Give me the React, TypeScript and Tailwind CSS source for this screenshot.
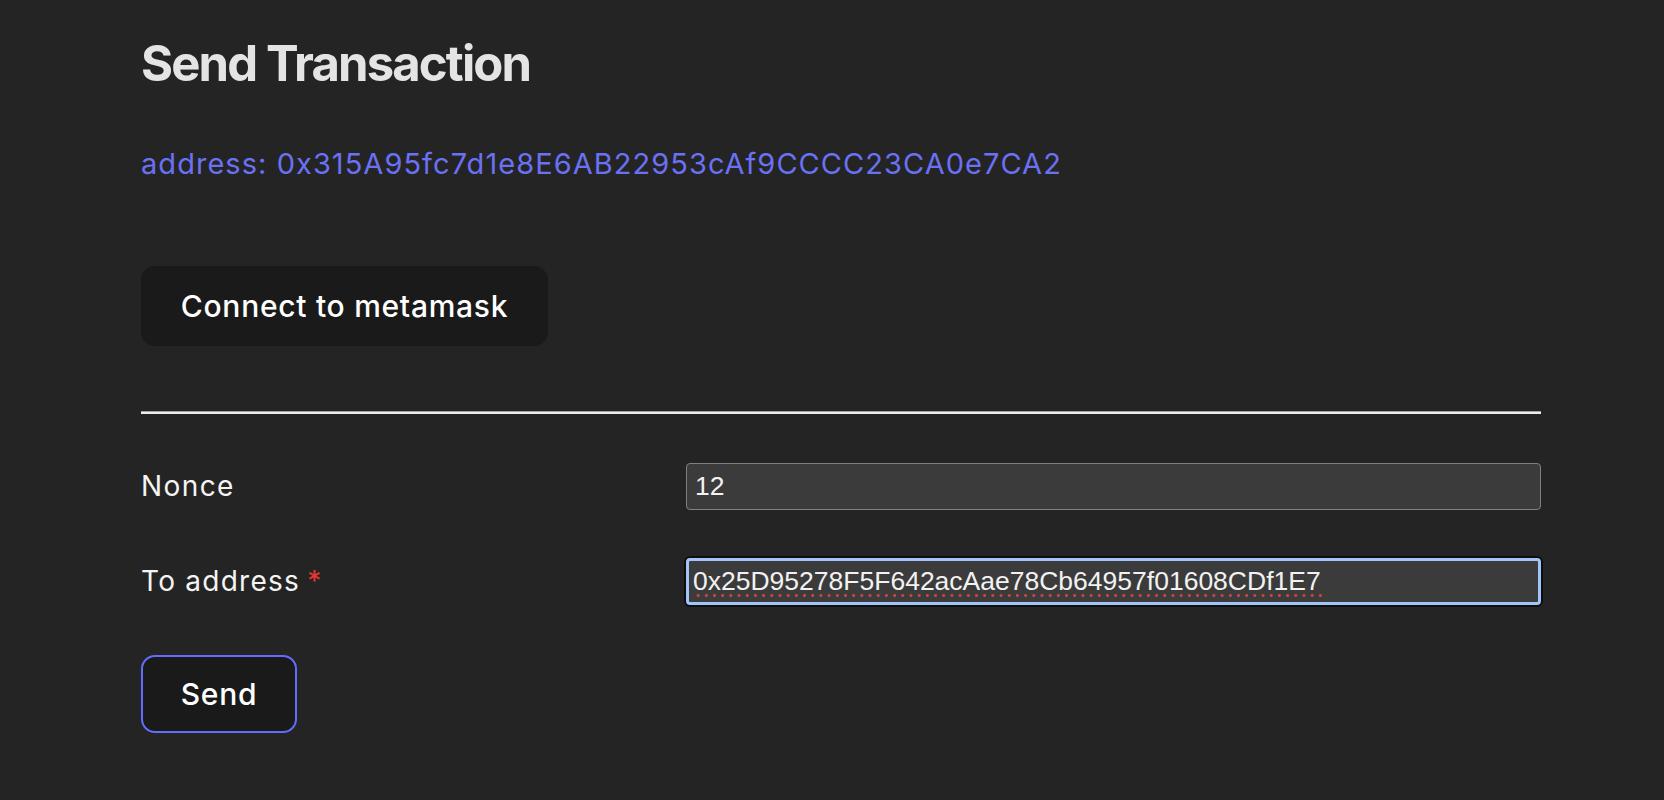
import React from "react";

export default function App() {
  return (
    <div
      className="min-h-screen w-full bg-[#242424] text-[#e4e4e4]"
      style={{ fontFamily: "Inter, 'Noto Sans', sans-serif" }}
    >
      <div className="ml-[141px] w-[1400px] pt-[34px]">
        <h1 className="h-[60px] text-[49px] font-bold leading-[60px] tracking-[-0.038em] text-[#e4e4e4]">
          Send Transaction
        </h1>
        <p className="mt-[50px] h-[40px] text-[29px] leading-[40px] tracking-[0.036em] text-[#6a71f3]">
          address: 0x315A95fc7d1e8E6AB22953cAf9CCCC23CA0e7CA2
        </p>
        <button
          type="button"
          className="mt-[82px] flex h-[80px] w-[407px] items-center justify-center rounded-[14px] border border-transparent bg-[#1a1a1a] text-[30px] font-medium leading-none tracking-[0.024em] text-white"
        >
          Connect to metamask
        </button>
        <div className="mt-[65px] h-[3px] w-full border-t border-[#a3a3a3] bg-[#ededed]" />
        <form className="mt-[49px] flex flex-col gap-[48px]" onSubmit={(e) => e.preventDefault()}>
          <div className="grid h-[47px] grid-cols-[545px_1fr] items-center">
            <label htmlFor="nonce" className="text-[28px] leading-[47px] tracking-[0.05em] text-[#f4f4f4]">
              Nonce
            </label>
            <input
              id="nonce"
              defaultValue="12"
              className="h-[47px] w-full rounded-[4px] border border-[#808080] bg-[#3b3b3b] px-[8px] text-[26.5px] text-[#f2f2f2] outline-none"
              style={{ fontFamily: "'Liberation Sans', Arial, sans-serif" }}
            />
          </div>
          <div className="grid h-[47px] grid-cols-[545px_1fr] items-center">
            <label htmlFor="to" className="text-[28px] leading-[47px] tracking-[0.045em] text-[#f4f4f4]">
              To address<span className="ml-[7px] text-[#e5372f]">*</span>
            </label>
            <div className="relative h-[47px] w-full">
              <input
                id="to"
                defaultValue="0x25D95278F5F642acAae78Cb64957f01608CDf1E7"
                spellCheck={false}
                className="h-[47px] w-full rounded-[4px] border-[3px] border-[#a2c5f9] bg-[#3b3b3b] px-[4px] text-[26.5px] text-[#f2f2f2] shadow-[0_0_0_2px_#0e0e0e] outline-none"
                style={{ fontFamily: "'Liberation Sans', Arial, sans-serif" }}
              />
              <span
                aria-hidden="true"
                className="pointer-events-none absolute left-[8px] top-[36px] h-[3px] w-[630px] bg-[radial-gradient(circle,#cf463c_1.2px,transparent_1.7px)] bg-[length:8.2px_3px] bg-repeat-x"
              />
            </div>
          </div>
          <button
            type="submit"
            className="mt-[2px] flex h-[78px] w-[156px] items-center justify-center rounded-[14px] border-2 border-[#646cff] bg-[#1a1a1a] text-[30px] font-medium leading-none tracking-[0.024em] text-white"
          >
            Send
          </button>
        </form>
      </div>
    </div>
  );
}
